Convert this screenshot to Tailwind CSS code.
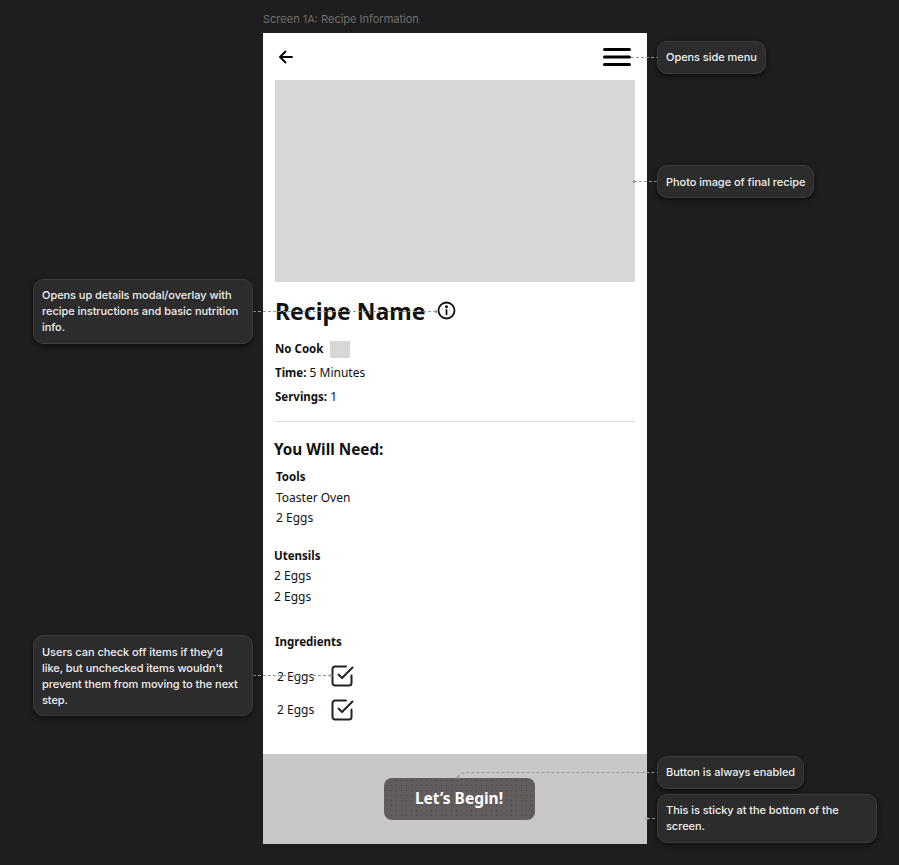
<!DOCTYPE html>
<html lang="en">
<head>
    <meta charset="UTF-8">
    <meta name="viewport" content="width=device-width, initial-scale=1.0">
    <script src="https://cdn.jsdelivr.net/npm/@tailwindcss/browser@4"></script>
    <title>Screen 1A: Recipe Information</title>
</head>
<body class="bg-[#1e1e1e]">
    <div class="relative w-[899px] h-[865px] overflow-hidden bg-[#1e1e1e] pt-[12px] pl-[263px]">
        <p class="font-['Inter',sans-serif] text-[11px] leading-[14px] h-[21px] text-[#6f6f6f]">Screen 1A: Recipe Information</p>

        <!-- Phone screen -->
        <main class="w-[384px] h-[811px] bg-white flex flex-col font-['Noto_Sans',sans-serif] text-[#111]">
            <header class="h-[47px] flex justify-between items-center pl-[16px] pr-[16px] shrink-0">
                <svg width="14" height="14" viewBox="0 0 14 14" fill="none" stroke="#000" stroke-width="1.8" stroke-linecap="round" stroke-linejoin="round"><path d="M13 7H1.500M6.500 1.500 1 7l5.500 5.500"/></svg>
                <svg width="28" height="18" viewBox="0 0 28 18" stroke="#000" stroke-width="3" stroke-linecap="round"><path d="M1.500 1.500h25M1.500 9h25M1.500 16.500h25"/></svg>
            </header>
            <div class="mx-[12px] h-[202px] bg-[#d7d7d7] shrink-0"></div>

            <div class="flex items-center gap-[12px] ml-[12px] mt-[13px] h-[33px]">
                <h1 class="text-[23px] leading-[33px] font-bold">Recipe Name</h1>
                <svg class="-mt-[2px]" width="19" height="19" viewBox="0 0 19 19" fill="none" stroke="#111" stroke-width="1.8" stroke-linecap="round"><circle cx="9.500" cy="9.500" r="8"/><path d="M9.500 9v4.400"/><circle cx="9.500" cy="5.800" r="0.600" fill="#111"/></svg>
            </div>

            <div class="ml-[12px] mt-[9px] text-[12px] leading-[24px]">
                <p class="flex items-center gap-[7px] font-bold text-[11.500px]">No Cook <span class="w-[20px] h-[17px] bg-[#d7d7d7]"></span></p>
                <p><b class="text-[11.500px]">Time:</b> 5 Minutes</p>
                <p><b class="text-[11.500px]">Servings:</b> 1</p>
            </div>

            <hr class="mx-[12px] mt-[12px] border-[#dcdcdc]">

            <h2 class="ml-[11px] mt-[16px] text-[15.300px] leading-[22px] font-bold">You Will Need:</h2>

            <div class="ml-[13px] mt-[7px] text-[12px] leading-[20.500px]">
                <h3 class="font-bold text-[11.500px]">Tools</h3>
                <p>Toaster Oven</p>
                <p>2 Eggs</p>
            </div>
            <div class="ml-[11px] mt-[17px] text-[12px] leading-[20.500px]">
                <h3 class="font-bold text-[11.500px]">Utensils</h3>
                <p>2 Eggs</p>
                <p>2 Eggs</p>
            </div>
            <div class="ml-[12px] mt-[24px] text-[12px] leading-[21px]">
                <h3 class="font-bold text-[11.500px]">Ingredients</h3>
                <div class="flex items-center gap-[17px] ml-[2px] mt-[12px] h-[24px]">
                    <p class="w-[37px] whitespace-nowrap">2 Eggs</p>
                    <svg class="-mt-[2px]" width="23" height="23" viewBox="0 0 23 23" fill="none" stroke="#222" stroke-width="2" stroke-linecap="round" stroke-linejoin="round"><path d="M7.500 10.500l3.500 3.500L21.500 3.500"/><path d="M20.500 11.500v7.500a2.500 2.500 0 0 1-2.500 2.500H4a2.500 2.500 0 0 1-2.500-2.500V5A2.500 2.500 0 0 1 4 2.500h11"/></svg>
                </div>
                <div class="flex items-center gap-[17px] ml-[2px] mt-[9px] h-[24px]">
                    <p class="w-[37px] whitespace-nowrap">2 Eggs</p>
                    <svg width="23" height="23" viewBox="0 0 23 23" fill="none" stroke="#222" stroke-width="2" stroke-linecap="round" stroke-linejoin="round"><path d="M7.500 10.500l3.500 3.500L21.500 3.500"/><path d="M20.500 11.500v7.500a2.500 2.500 0 0 1-2.500 2.500H4a2.500 2.500 0 0 1-2.500-2.500V5A2.500 2.500 0 0 1 4 2.500h11"/></svg>
                </div>
            </div>

            <!-- Sticky footer -->
            <footer class="mt-auto h-[90px] bg-[#c8c8c8] flex justify-center items-center pl-[8px] shrink-0">
                <button class="w-[151px] h-[42px] rounded-[8px] bg-[#625d5d] bg-[radial-gradient(#494545_0.7px,transparent_0.8px)] bg-[size:5px_5px] text-white text-[15.500px] font-bold">Let’s Begin!</button>
            </footer>
        </main>

        <!-- Connector lines -->
        <svg class="absolute left-0 top-0 pointer-events-none" width="899" height="865" fill="none" stroke="#999" stroke-width="1" stroke-dasharray="3 2">
            <path d="M631 57.500H657"/>
            <path d="M634 181.500H657"/>
            <path d="M253 311.500H436"/>
            <path d="M253 675.500H331"/>
            <path d="M458 777C460 773 464 772.500 470 772.500H657"/>
            <path d="M647 818.500H657"/>
            <circle cx="634" cy="181.500" r="1.500" fill="#999" stroke="none"/>
            <circle cx="436" cy="311.500" r="1.500" fill="#999" stroke="none"/>
            <circle cx="331" cy="675.500" r="1.500" fill="#999" stroke="none"/>
            <circle cx="458" cy="777" r="1.500" fill="#999" stroke="none"/>
            <circle cx="647" cy="818.500" r="1.500" fill="#999" stroke="none"/>
        </svg>

        <!-- Annotations -->
        <div class="absolute left-[657px] top-[41px] h-[33px] flex items-center px-[8px] rounded-[10px] bg-[#2c2c2c] border border-[#3c3c3c] shadow-[0_2px_5px_rgba(0,0,0,0.6)] font-['Inter',sans-serif] font-medium text-[11px] tracking-[-0.05px] text-[#f0f0f0] whitespace-nowrap">Opens side menu</div>
        <div class="absolute left-[657px] top-[165px] h-[33px] flex items-center px-[8px] pt-[1px] rounded-[10px] bg-[#2c2c2c] border border-[#3c3c3c] shadow-[0_2px_5px_rgba(0,0,0,0.6)] font-['Inter',sans-serif] font-medium text-[11px] tracking-[-0.05px] text-[#f0f0f0] whitespace-nowrap">Photo image of final recipe</div>
        <div class="absolute left-[33px] top-[279px] w-[220px] h-[65px] flex items-center px-[8px] pb-[2px] rounded-[10px] bg-[#2c2c2c] border border-[#3c3c3c] shadow-[0_2px_5px_rgba(0,0,0,0.6)] font-['Inter',sans-serif] font-medium text-[11px] leading-[16px] tracking-[-0.05px] text-[#f0f0f0]">Opens up details modal/overlay with recipe instructions and basic nutrition info.</div>
        <div class="absolute left-[33px] top-[635px] w-[220px] h-[81px] flex items-center px-[8px] rounded-[10px] bg-[#2c2c2c] border border-[#3c3c3c] shadow-[0_2px_5px_rgba(0,0,0,0.6)] font-['Inter',sans-serif] font-medium text-[11px] leading-[16px] tracking-[-0.05px] text-[#f0f0f0]">Users can check off items if they'd like, but unchecked items wouldn't prevent them from moving to the next step.</div>
        <div class="absolute left-[657px] top-[756px] h-[33px] flex items-center px-[8px] rounded-[10px] bg-[#2c2c2c] border border-[#3c3c3c] shadow-[0_2px_5px_rgba(0,0,0,0.6)] font-['Inter',sans-serif] font-medium text-[11px] tracking-[-0.05px] text-[#f0f0f0] whitespace-nowrap">Button is always enabled</div>
        <div class="absolute left-[657px] top-[794px] w-[220px] h-[49px] flex items-center px-[8px] pb-[2px] rounded-[10px] bg-[#2c2c2c] border border-[#3c3c3c] shadow-[0_2px_5px_rgba(0,0,0,0.6)] font-['Inter',sans-serif] font-medium text-[11px] leading-[16px] tracking-[-0.05px] text-[#f0f0f0]">This is sticky at the bottom of the screen.</div>
    </div>
</body>
</html>
